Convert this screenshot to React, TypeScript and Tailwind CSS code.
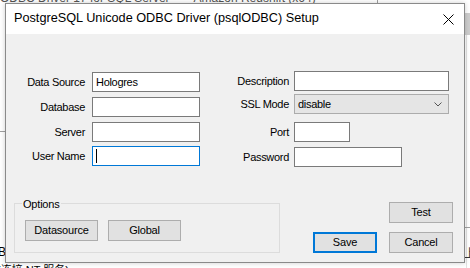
import React from "react";

const font = "font-['Liberation_Sans','Noto_Sans_CJK_SC',sans-serif]";

function TextBox({ width, value, focused }: { width: string; value?: string; focused?: boolean }) {
    return (
        <div
            className={`${width} h-[20px] bg-white border flex items-center pl-[3px] text-[11px] text-black ${
                focused ? "border-[#0078d7]" : "border-[#7a7a7a]"
            }`}
        >
            {value}
            {focused && <span className="block w-px h-[14px] bg-black"></span>}
        </div>
    );
}

function Button({ label, width, primary }: { label: string; width: string; primary?: boolean }) {
    return (
        <div
            className={`${width} h-[21px] bg-[#e1e1e1] flex items-center justify-center text-[11px] tracking-[-0.2px] text-black ${
                primary ? "border-2 border-[#0078d7]" : "border border-[#adadad]"
            }`}
        >
            {label}
        </div>
    );
}

export default function App() {
    return (
        <div className={`relative w-[470px] h-[268px] bg-white overflow-hidden ${font}`}>
            {/* window behind the dialog */}
            <div className="absolute left-[0px] -top-[11px] text-[12px] text-[#555] whitespace-nowrap">
                ODBC Driver 17 for SQL Server　　Amazon Redshift (x64)
            </div>
            <div className="absolute left-[377px] top-0 w-px h-[4px] bg-[#a0a0a0]"></div>
            <div className="absolute left-[465px] top-[13px] w-[5px] h-[22px] bg-[#cdcdcd]"></div>
            <div className="absolute left-[466px] top-[35px] w-px h-[233px] bg-[#e3e3e3]"></div>
            <div className="absolute left-0 top-[131px] w-[5px] h-px bg-[#a0a0a0]"></div>
            <div className="absolute left-[465px] top-[227px] w-[5px] h-px bg-[#a0a0a0]"></div>
            <div className="absolute left-[-2px] top-[243px] text-[12px] text-black">B</div>
            <div className="absolute left-[464px] top-[245px] text-[12px] text-[#333]">上</div>
            <div className="absolute left-[-3px] top-[262px] text-[11px] text-black whitespace-nowrap">
                (连接 NT 服务)
            </div>

            {/* dialog */}
            <div className="relative ml-[5px] mt-[3px] w-[460px] h-[260px] border border-[#8a8a8a] flex flex-col shadow-[0_0_5px_rgba(0,0,0,0.2)]">
                <div className="h-[30px] bg-white flex items-center pl-[8px] pr-[10px]">
                    <span className="text-[12.7px] text-black">PostgreSQL Unicode ODBC Driver (psqlODBC) Setup</span>
                    <svg className="ml-auto" width="11" height="11" viewBox="0 0 11 11">
                        <path d="M0.5 0.5 L10.5 10.5 M10.5 0.5 L0.5 10.5" stroke="#000" strokeWidth="1" />
                    </svg>
                </div>

                <div className="flex-1 bg-[#f0f0f0] flex flex-col">
                    <div className="flex items-start tracking-[-0.3px]">
                        {/* left column */}
                        <div className="flex flex-col pt-[38px] text-[11px] text-black">
                            <div className="flex items-center gap-[7px]">
                                <span className="w-[79px] text-right">Data Source</span>
                                <TextBox width="w-[108px]" value="Hologres" />
                            </div>
                            <div className="flex items-center gap-[7px] mt-[5px]">
                                <span className="w-[79px] text-right">Database</span>
                                <TextBox width="w-[108px]" />
                            </div>
                            <div className="flex items-center gap-[7px] mt-[5px]">
                                <span className="w-[79px] text-right">Server</span>
                                <TextBox width="w-[108px]" />
                            </div>
                            <div className="flex items-center gap-[7px] mt-[4px]">
                                <span className="w-[79px] text-right">User Name</span>
                                <TextBox width="w-[108px]" focused />
                            </div>
                        </div>

                        {/* right column */}
                        <div className="flex flex-col pt-[37px] text-[11px] text-black">
                            <div className="flex items-center gap-[5px]">
                                <span className="w-[89px] text-right">Description</span>
                                <TextBox width="w-[155px]" />
                            </div>
                            <div className="flex items-center gap-[5px] mt-[3px]">
                                <span className="w-[89px] text-right">SSL Mode</span>
                                <div className="w-[155px] h-[20px] bg-[#e5e5e5] border border-[#acacac] flex items-center pl-[3px] pr-[6px]">
                                    <span>disable</span>
                                    <svg className="ml-auto" width="8" height="5" viewBox="0 0 8 5">
                                        <path d="M0.5 0.5 L4 4 L7.5 0.5" stroke="#555" strokeWidth="1" fill="none" />
                                    </svg>
                                </div>
                            </div>
                            <div className="flex items-center gap-[5px] mt-[8px]">
                                <span className="w-[89px] text-right">Port</span>
                                <TextBox width="w-[56px]" />
                            </div>
                            <div className="flex items-center gap-[5px] mt-[5px]">
                                <span className="w-[89px] text-right">Password</span>
                                <TextBox width="w-[108px]" />
                            </div>
                        </div>
                    </div>

                    {/* bottom */}
                    <div className="flex items-start mt-[35px]">
                        <div className="relative ml-[8px] mt-[1px] w-[266px] h-[50px] border border-[#dcdcdc] pt-[16px] pl-[10px] flex gap-[10px]">
                            <span className="absolute -top-[8px] left-[7px] px-[1px] bg-[#f0f0f0] text-[11px] tracking-[-0.2px] text-black">
                                Options
                            </span>
                            <Button label="Datasource" width="w-[73px]" />
                            <Button label="Global" width="w-[73px]" />
                        </div>
                        <div className="ml-auto mr-[11px] flex flex-col items-end">
                            <Button label="Test" width="w-[64px]" />
                            <div className="flex gap-[12px] mt-[9px]">
                                <Button label="Save" width="w-[64px]" primary />
                                <Button label="Cancel" width="w-[64px]" />
                            </div>
                        </div>
                    </div>
                </div>
            </div>
        </div>
    );
}
